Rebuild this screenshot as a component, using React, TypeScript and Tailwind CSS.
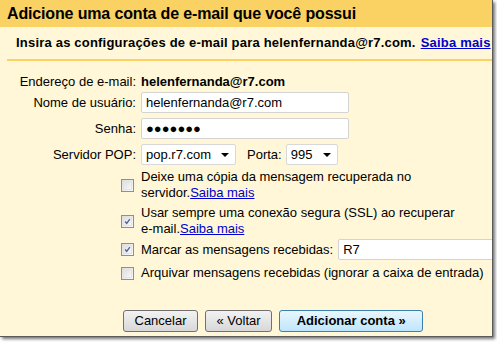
const font = { fontFamily: '"Liberation Sans", Arial, sans-serif' }

function Checkbox({ checked }: { checked?: boolean }) {
  return (
    <div className="flex h-[13px] w-[13px] shrink-0 items-center justify-center border border-[#8e8f8f] bg-gradient-to-br from-[#dcdcdc] to-[#fbfbfb] p-px">
      <div className="flex h-full w-full items-center justify-center border border-[#e4e4e4] bg-gradient-to-br from-[#e0e0e0] to-[#f8f8f8]">
        {checked ? (
          <svg width="9" height="9" viewBox="0 0 9 9">
            <path d="M1.5 4.5 L3.5 7 L7.5 1.5" fill="none" stroke="#4a5f97" strokeWidth="1.6" />
          </svg>
        ) : null}
      </div>
    </div>
  )
}

function Select({ value, width }: { value: string; width: string }) {
  return (
    <div className={`flex h-[21px] items-center justify-between rounded-[2px] border border-[#d8d8d8] bg-white pl-[4px] pr-[6px] ${width}`}>
      <span>{value}</span>
      <svg width="8" height="4" viewBox="0 0 8 4">
        <path d="M0 0 H8 L4 4 Z" fill="#000" />
      </svg>
    </div>
  )
}

function Button({ children, primary }: { children: React.ReactNode; primary?: boolean }) {
  return (
    <button
      className={
        primary
          ? 'h-[22px] rounded-[3px] border border-[#3c7fb1] bg-gradient-to-b from-[#eaf6fd] to-[#bee6fd] px-[16.5px] text-[13px] font-bold text-black'
          : 'h-[22px] rounded-[3px] border border-[#707070] bg-gradient-to-b from-[#f2f2f2] to-[#d8d8d8] px-[10.5px] text-[13px] text-black'
      }
      style={font}
    >
      {children}
    </button>
  )
}

export default function App() {
  return (
    <div className="h-[342px] w-[497px] overflow-hidden bg-white" style={font}>
      <div className="flex h-[337px] w-[493px] flex-col overflow-hidden border-r border-b border-[#5a5a5a] bg-[#fff7d7] text-[13px] text-black shadow-[2px_2px_3px_rgba(0,0,0,0.55)]">
        <div className="flex h-[27px] shrink-0 items-center bg-[#fad163] pl-[7px] text-[16px] font-bold tracking-[-0.15px]">
          Adicione uma conta de e-mail que você possui
        </div>
        <div className="ml-[7px] flex h-[34px] shrink-0 items-center border-b-2 border-[#fad163] pl-[9px] font-bold tracking-[0.2px] whitespace-nowrap">
          Insira as configurações de e-mail para helenfernanda@r7.com.
          <a className="ml-[5px] text-[#0000cc] underline">Saiba mais</a>
        </div>

        <div className="grid grid-cols-[136px_1fr] items-center gap-x-[5px] pt-[10px]">
          <div className="text-right">Endereço de e-mail:</div>
          <div className="h-[21px] leading-[21px] font-bold">helenfernanda@r7.com</div>

          <div className="text-right">Nome de usuário:</div>
          <div className="flex h-[21px] w-[208px] items-center rounded-[2px] border border-[#d3d3d3] bg-white pl-[4px]">
            helenfernanda@r7.com
          </div>

          <div className="mt-[5px] text-right">Senha:</div>
          <div className="mt-[5px] flex h-[21px] w-[208px] items-center rounded-[2px] border border-[#d3d3d3] bg-white pl-[4px] text-[13px]">
            ●●●●●●●
          </div>

          <div className="mt-[5px] text-right">Servidor POP:</div>
          <div className="mt-[5px] flex items-center">
            <Select value="pop.r7.com" width="w-[95px]" />
            <span className="ml-[11px] mr-[4px]">Porta:</span>
            <Select value="995" width="w-[52px]" />
          </div>
        </div>

        <div className="mt-[4px] flex flex-col pl-[121px] leading-[16px]">
          <div className="flex items-center gap-[7px]">
            <Checkbox />
            <div>
              Deixe uma cópia da mensagem recuperada no
              <br />
              servidor.<a className="text-[#0000cc] underline">Saiba mais</a>
            </div>
          </div>
          <div className="mt-[4px] flex items-center gap-[7px]">
            <Checkbox checked />
            <div>
              Usar sempre uma conexão segura (SSL) ao recuperar
              <br />
              e-mail.<a className="text-[#0000cc] underline">Saiba mais</a>
            </div>
          </div>
          <div className="mt-[2px] flex items-center">
            <Checkbox checked />
            <span className="ml-[7px] whitespace-nowrap">Marcar as mensagens recebidas:</span>
            <div className="ml-[5px] flex h-[21px] w-[170px] shrink-0 items-center rounded-[2px] border border-[#d3d3d3] bg-white pl-[4px]">
              R7
            </div>
          </div>
          <div className="mt-[5px] flex items-center gap-[7px]">
            <Checkbox />
            <span className="whitespace-nowrap">Arquivar mensagens recebidas (ignorar a caixa de entrada)</span>
          </div>
        </div>

        <div className="mt-auto mb-[4px] flex gap-[7px] pl-[123px]">
          <Button>Cancelar</Button>
          <Button>« Voltar</Button>
          <Button primary>Adicionar conta »</Button>
        </div>
      </div>
    </div>
  )
}
